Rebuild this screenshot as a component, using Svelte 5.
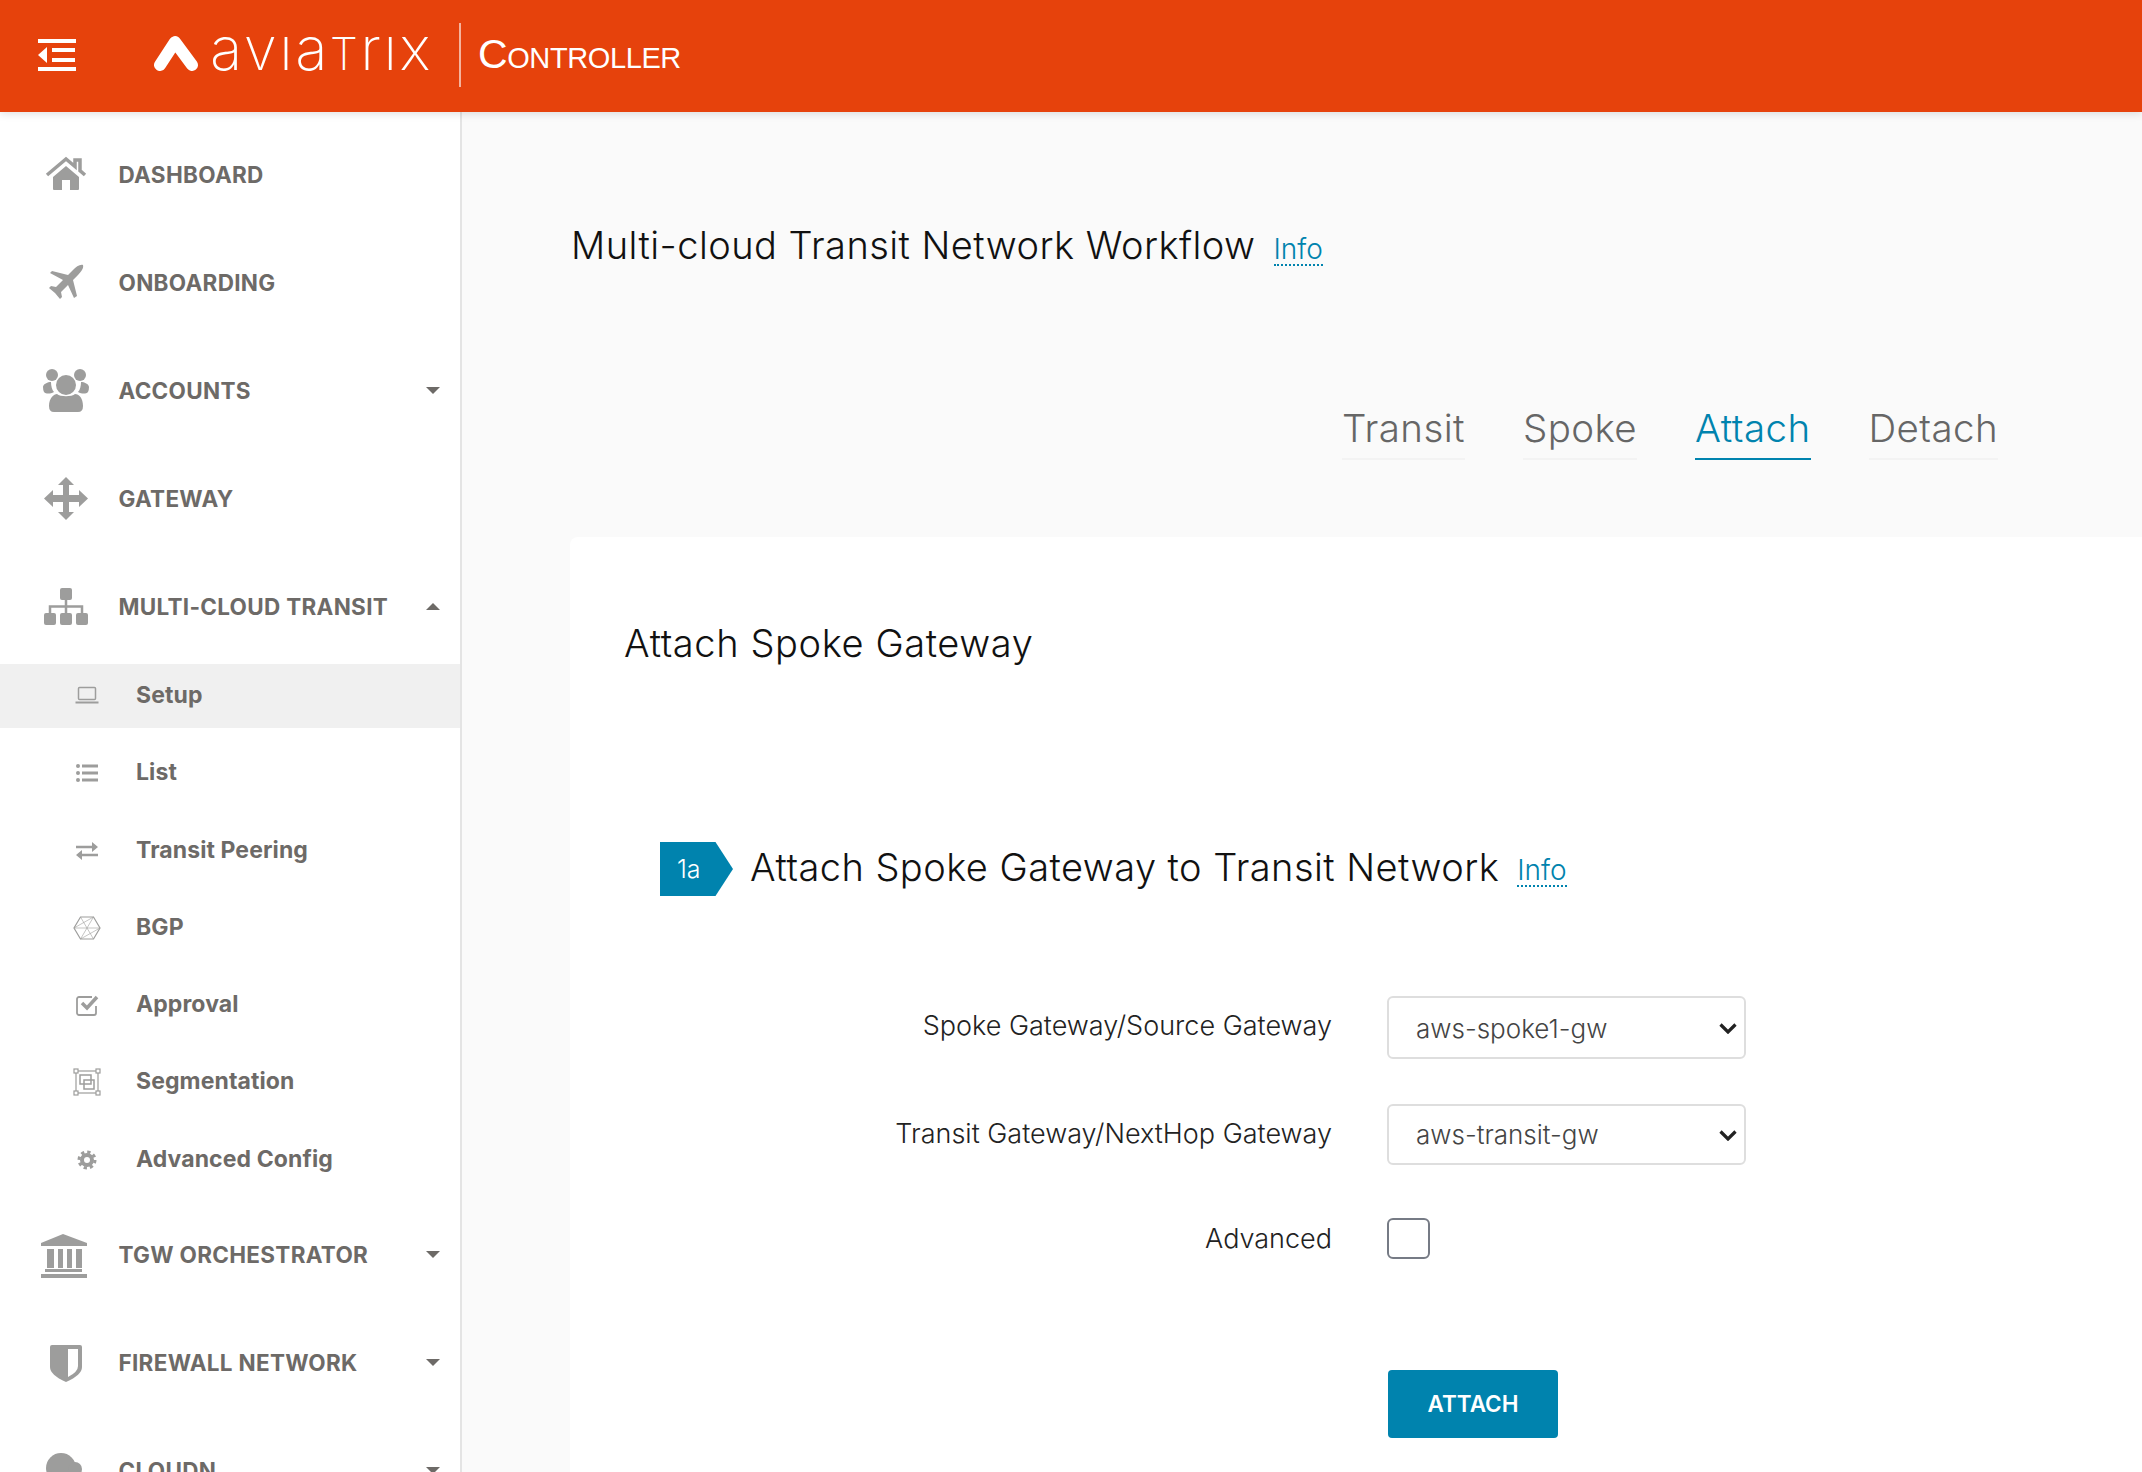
<script>
  // sidebar data
  const topBefore = [
    { label: 'DASHBOARD', icon: 'home' },
    { label: 'ONBOARDING', icon: 'plane' },
    { label: 'ACCOUNTS', icon: 'users', caret: 'down' },
    { label: 'GATEWAY', icon: 'move' },
    { label: 'MULTI-CLOUD TRANSIT', icon: 'sitemap', caret: 'up' }
  ];
  const subItems = [
    { label: 'Setup', icon: 'laptop', active: true },
    { label: 'List', icon: 'list' },
    { label: 'Transit Peering', icon: 'exchange' },
    { label: 'BGP', icon: 'hex' },
    { label: 'Approval', icon: 'check' },
    { label: 'Segmentation', icon: 'segment' },
    { label: 'Advanced Config', icon: 'gear' }
  ];
  const topAfter = [
    { label: 'TGW ORCHESTRATOR', icon: 'bank', caret: 'down' },
    { label: 'FIREWALL NETWORK', icon: 'shield', caret: 'down' },
    { label: 'CLOUDN', icon: 'cloud', caret: 'down' }
  ];
  const tabs = ['Transit', 'Spoke', 'Attach', 'Detach'];
</script>

{#snippet topIcon(name)}
  <svg class="icon-top" viewBox="0 0 48 48" fill="#9d9d9c">
    {#if name === 'home'}
      <path d="M5 25 24 9l9 7.500V10h5v10.700L43 25" fill="none" stroke="#9d9d9c" stroke-width="3.500" />
      <path d="M11 27 24 16l13 11v12a1 1 0 0 1-1 1h-8V30h-8v10h-8a1 1 0 0 1-1-1z" />
    {:else if name === 'plane'}
      <path d="M41 7c1 3-2 7-5 10l-5 5 4 16-3 2-6-13-7 7 1 5-2 2-5-6-6-5 2-2 5 1 7-7L8 15l2-2 16 4 5-5c3-3 7-6 10-5z" />
    {:else if name === 'users'}
      <circle cx="10" cy="9" r="6" />
      <circle cx="38" cy="9" r="6" />
      <circle cx="24" cy="19" r="10" />
      <path d="M7 40c0-8 5-12 8-12 3 3 15 3 18 0 4 0 8 4 8 12q0 6-5 6H12q-5 0-5-6z" />
      <path d="M1 21c0-3 5-5 8-5 0 4 1 8 3 10-4 2-8 2-10 0q-1-2-1-5zM47 21c0-3-5-5-8-5 0 4-1 8-3 10 4 2 8 2 10 0q1-2 1-5z" />
    {:else if name === 'move'}
      <path d="M24 3l8 8h-5v10h10v-5l9 8.500-9 8.500v-5H27v10h5l-8 8-8-8h5V28H11v5l-9-8.500L11 16v5h10V11h-5z" />
    {:else if name === 'sitemap'}
      <rect x="18" y="6" width="12" height="12" rx="2" />
      <rect x="2" y="31" width="12" height="12" rx="2" />
      <rect x="18" y="31" width="12" height="12" rx="2" />
      <rect x="34" y="31" width="12" height="12" rx="2" />
      <path d="M24 18v13M8 31v-6.500h32V31" fill="none" stroke="#9d9d9c" stroke-width="2.500" />
    {:else if name === 'bank'}
      <path d="M21 3-1 12v3h46v-3z" />
      <path d="M5 18h7v19H5zM16 18h5v19h-5zM25 18h5v19h-5zM34 18h6v19h-6zM3 38h37v3H3zM-1 43h46v4H-1z" />
    {:else if name === 'shield'}
      <path d="M8 8q0-2 2-2h28q2 0 2 2v20q0 8-16 15Q8 36 8 28z" />
      <path d="M26 10h10v17q0 6-10 11z" fill="#fff" />
    {:else if name === 'cloud'}
      <circle cx="19" cy="21" r="15" />
      <circle cx="33" cy="22" r="7" />
      <rect x="1" y="24" width="45" height="20" rx="10" />
    {/if}
  </svg>
{/snippet}

{#snippet subIcon(name)}
  <svg class="icon-sub" viewBox="0 0 28 28" fill="none" stroke="#9d9d9c" stroke-width="1.500">
    {#if name === 'laptop'}
      <rect x="5.500" y="5.500" width="17" height="12" rx="1" />
      <path d="M2.500 20.500h23" stroke-width="2" />
    {:else if name === 'list'}
      <g fill="#9d9d9c" stroke="none">
        <circle cx="5" cy="7" r="2" /><circle cx="5" cy="14" r="2" /><circle cx="5" cy="21" r="2" />
        <rect x="9" y="5.500" width="16" height="3" /><rect x="9" y="12.500" width="16" height="3" /><rect x="9" y="19.500" width="16" height="3" />
      </g>
    {:else if name === 'exchange'}
      <path d="M3 10h17M8 18h17" stroke-width="2.500" />
      <path d="M19 5l6 5-6 5zM9 13l-6 5 6 5z" fill="#9d9d9c" stroke="none" />
    {:else if name === 'hex'}
      <path d="M7.500 3h13L27 14l-6.500 11h-13L1 14z" stroke-width="1.200" />
      <path d="M7.500 3 20.500 25M20.500 3 7.500 25M1 14l19.500-11M27 14 7.500 25M1 14h26" stroke-width=".600" />
    {:else if name === 'check'}
      <path d="M23 15v7a2 2 0 0 1-2 2H6a2 2 0 0 1-2-2V8a2 2 0 0 1 2-2h13" stroke-width="1.800" />
      <path d="M9 12l5 5 10-11" stroke-width="3.500" />
    {:else if name === 'segment'}
      <rect x="3" y="3" width="22" height="22" stroke-width="1.200" />
      <g fill="#fff" stroke-width="1.200">
        <rect x="1" y="1" width="4" height="4" /><rect x="23" y="1" width="4" height="4" />
        <rect x="1" y="23" width="4" height="4" /><rect x="23" y="23" width="4" height="4" />
      </g>
      <rect x="7" y="7" width="11" height="9" />
      <rect x="11" y="12" width="10" height="9" />
    {:else if name === 'gear'}
      <circle cx="14" cy="14" r="5" stroke-width="4" />
      <circle cx="14" cy="14" r="8" stroke-width="3" stroke-dasharray="3.300 2.980" />
    {/if}
  </svg>
{/snippet}

{#snippet infoLink()}
  <a class="info" href="#info">Info</a>
{/snippet}

{#snippet chevron()}
  <svg class="chevron" viewBox="0 0 18 11" fill="none" stroke="#222" stroke-width="3.200">
    <path d="M1.500 1.500 9 9l7.500-7.500" />
  </svg>
{/snippet}

<div class="page">
  <header class="topbar">
    <svg class="menu" viewBox="0 0 38 32" fill="#fff">
      <path d="M0 0h38v4H0zM0 28h38v4H0zM14 9h23v4H14zM14 19h23v4H14zM9 8v16L0 16z" />
    </svg>
    <svg class="logo-mark" viewBox="0 0 46 36">
      <path d="M7 30 22 7l17 23" fill="none" stroke="#fff" stroke-width="12" stroke-linecap="round" stroke-linejoin="round" />
    </svg>
    <span class="wordmark">avıa<span class="small-t">T</span>rıx</span>
    <span class="divider"></span>
    <span class="product">Controller</span>
  </header>

  <div class="body">
    <nav class="sidebar">
      {#each topBefore as item}
        <div class="top-item">
          {@render topIcon(item.icon)}
          <span>{item.label}</span>
          {#if item.caret}<i class="caret {item.caret}"></i>{/if}
        </div>
      {/each}

      <div class="sub-list">
        {#each subItems as item}
          <div class="sub-item" class:active={item.active}>
            {@render subIcon(item.icon)}
            <span>{item.label}</span>
          </div>
        {/each}
      </div>

      {#each topAfter as item}
        <div class="top-item">
          {@render topIcon(item.icon)}
          <span>{item.label}</span>
          {#if item.caret}<i class="caret {item.caret}"></i>{/if}
        </div>
      {/each}
    </nav>

    <main class="content">
      <div class="title-row">
        <h1>Multi-cloud Transit Network Workflow</h1>
        {@render infoLink()}
      </div>

      <div class="tabs">
        {#each tabs as tab}
          <div class="tab" class:current={tab === 'Attach'}>{tab}</div>
        {/each}
      </div>

      <section class="card">
        <h2>Attach Spoke Gateway</h2>

        <div class="step-row">
          <span class="step">1a</span>
          <h3>Attach Spoke Gateway to Transit Network</h3>
          {@render infoLink()}
        </div>

        <div class="form">
          <div class="form-row first">
            <label for="spoke">Spoke Gateway/Source Gateway</label>
            <div class="select-wrap">
              <select id="spoke"><option>aws-spoke1-gw</option></select>
              {@render chevron()}
            </div>
          </div>
          <div class="form-row second">
            <label for="transit">Transit Gateway/NextHop Gateway</label>
            <div class="select-wrap">
              <select id="transit"><option>aws-transit-gw</option></select>
              {@render chevron()}
            </div>
          </div>
          <div class="form-row third">
            <label for="advanced">Advanced</label>
            <input id="advanced" type="checkbox" />
          </div>
          <button type="button">ATTACH</button>
        </div>
      </section>
    </main>
  </div>
</div>

<style>
  :global(body) {
    margin: 0;
    background: #fff;
  }
  .page {
    display: flex;
    flex-direction: column;
    height: 1472px;
    overflow: hidden;
    font-family: Inter, "Open Sans", sans-serif;
  }

  /* header */
  .topbar {
    display: flex;
    align-items: center;
    flex: 0 0 112px;
    background: #e6420c;
    color: #fff;
    padding-left: 38px;
    position: relative;
    z-index: 1;
    box-shadow: 0 2px 8px rgba(0, 0, 0, 0.12);
  }
  .menu {
    width: 38px;
    height: 32px;
    margin-right: 77px;
    margin-top: -2px;
  }
  .logo-mark {
    width: 46px;
    height: 36px;
    margin-top: -6px;
  }
  .wordmark {
    width: 220px;
    margin-left: 11px;
    margin-top: -11px;
    font-size: 60px;
    font-weight: 200;
    line-height: 60px;
    letter-spacing: 2.5px;
    white-space: nowrap;
  }
  .small-t {
    font-size: 0.74em;
  }
  .divider {
    width: 2px;
    height: 64px;
    margin: -2px 17px 0 29px;
    background: rgba(255, 255, 255, 0.6);
  }
  .product {
    font-family: "Liberation Sans", sans-serif;
    font-variant: small-caps;
    font-size: 41px;
    letter-spacing: -0.4px;
    margin-top: -3px;
  }

  .body {
    display: flex;
    flex: 1;
    min-height: 0;
  }

  /* sidebar */
  .sidebar {
    flex: 0 0 460px;
    padding-top: 8px;
    border-right: 2px solid #e4e4e4;
    background: #fff;
    color: #6d6a67;
    font-weight: 650;
  }
  .top-item {
    display: flex;
    align-items: center;
    height: 108px;
    padding: 0 20px 0 42px;
    font-size: 22.5px;
    letter-spacing: 0.3px;
  }
  .icon-top {
    flex: none;
    width: 48px;
    height: 48px;
    margin-right: 28.5px;
    overflow: visible;
  }
  .caret {
    margin-left: auto;
    border-left: 7px solid transparent;
    border-right: 7px solid transparent;
  }
  .caret.down {
    border-top: 7px solid #6d6a67;
  }
  .caret.up {
    border-bottom: 7px solid #6d6a67;
  }
  .sub-list {
    display: flex;
    flex-direction: column;
    gap: 13.3px;
    margin: 4px 0 9px;
  }
  .sub-item {
    display: flex;
    align-items: center;
    height: 64px;
    padding-left: 73px;
    font-size: 23px;
    letter-spacing: 0.1px;
  }
  .sub-item span {
    margin-bottom: 2px;
  }
  .sub-item.active {
    background: #f0f0f0;
  }
  .icon-sub {
    flex: none;
    width: 28px;
    height: 28px;
    margin-right: 35px;
  }

  /* main */
  .content {
    flex: 1;
    min-width: 0;
    padding: 0 0 0 108px;
    background: #fafafa;
  }
  .title-row {
    display: flex;
    align-items: center;
    gap: 18px;
    height: 60px;
    margin-top: 103px;
    padding-left: 1px;
  }
  h1,
  h2,
  h3 {
    margin: 0;
    font-weight: 300;
    color: #111;
    font-size: 38px;
    letter-spacing: 0.45px;
  }
  .info {
    align-self: flex-end;
    margin-bottom: 9px;
    color: #0083ae;
    font-size: 28px;
    font-weight: 300;
    line-height: 29px;
    text-decoration: none;
    border-bottom: 2px dotted #0083ae;
  }
  .tabs {
    display: flex;
    justify-content: flex-end;
    gap: 58px;
    margin-top: 123px;
    padding-right: 144px;
  }
  .tab {
    height: 60px;
    border-bottom: 2px solid #f3f3f3;
    color: #666;
    font-size: 38.5px;
    font-weight: 300;
    letter-spacing: 0.4px;
    line-height: 60px;
  }
  .tab.current {
    color: #0083ae;
    border-bottom-color: #0083ae;
  }
  .card {
    margin-top: 77px;
    height: 1000px;
    padding: 82px 0 0 54px;
    background: #fff;
    border-radius: 8px 0 0 0;
  }
  h2 {
    height: 51px;
    line-height: 48px;
    letter-spacing: 0.6px;
  }
  .step-row {
    display: flex;
    align-items: center;
    height: 54px;
    margin-top: 172px;
    padding-left: 36px;
  }
  .step {
    flex: none;
    box-sizing: border-box;
    width: 73px;
    height: 54px;
    padding-left: 17px;
    margin-right: 17px;
    background: #0083ae;
    clip-path: polygon(0 0, 76% 0, 100% 50%, 76% 100%, 0 100%);
    color: #fff;
    font-size: 25px;
    font-weight: 300;
    line-height: 54px;
  }
  h3 {
    margin-right: 18px;
    margin-bottom: 4px;
  }
  .form {
    margin-top: 100px;
  }
  .form-row {
    display: flex;
    align-items: center;
    gap: 55px;
  }
  .form-row label {
    width: 708px;
    text-align: right;
    color: #222;
    font-size: 27px;
    font-weight: 300;
  }
  .first label {
    margin-bottom: 5px;
  }
  .second label {
    margin-bottom: 2px;
  }
  .select-wrap {
    position: relative;
    display: flex;
  }
  .chevron {
    position: absolute;
    right: 9px;
    top: 50%;
    width: 18px;
    height: 11px;
    margin-top: -5px;
    pointer-events: none;
  }
  .select-wrap select {
    appearance: none;
    width: 359px;
    padding-left: 27px;
    background: #fff;
    border: 2px solid #dedede;
    border-radius: 6px;
    color: #444;
    font-family: inherit;
    font-size: 26px;
    font-weight: 300;
  }
  .first select {
    height: 63px;
    padding-top: 2px;
  }
  .second {
    margin-top: 45px;
  }
  .second select {
    height: 61px;
  }
  .third {
    margin-top: 53px;
  }
  .third input {
    appearance: none;
    width: 43px;
    height: 41px;
    margin: 0;
    background: #fff;
    border: 2px solid #767b85;
    border-radius: 6px;
  }
  button {
    display: block;
    width: 170px;
    height: 68px;
    margin: 111px 0 0 764px;
    padding-bottom: 3px;
    background: #0083ae;
    border: 0;
    border-radius: 4px;
    color: #fff;
    font-family: inherit;
    font-size: 22.5px;
    font-weight: 600;
  }
</style>
